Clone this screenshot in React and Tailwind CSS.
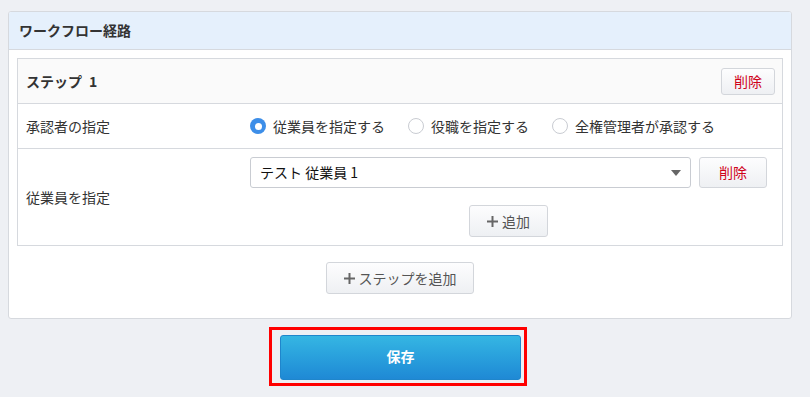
import React from "react";

const font = { fontFamily: '"Noto Sans CJK JP", "Noto Sans", sans-serif' };

function Radio({ checked, label }) {
  return (
    <label className="flex items-center gap-[7px]">
      {checked ? (
        <span className="w-[16px] h-[16px] rounded-full bg-[#3d8ee8] flex items-center justify-center">
          <span className="w-[7px] h-[7px] rounded-full bg-white" />
        </span>
      ) : (
        <span className="w-[16px] h-[16px] rounded-full border border-[#c9ccd2] bg-white" />
      )}
      <span className="text-[14px] text-[#333]">{label}</span>
    </label>
  );
}

function Plus() {
  return (
    <svg width="11" height="11" viewBox="0 0 11 11" className="mr-[4px]">
      <path d="M5.5 0 V11 M0 5.5 H11" stroke="#666" strokeWidth="2" />
    </svg>
  );
}

function GrayButton({ children, className = "" }) {
  return (
    <button
      className={
        "rounded-[3px] border border-[#d3d6db] bg-gradient-to-b from-[#fdfdfe] to-[#eef0f3] text-[14px] flex items-center justify-center " +
        className
      }
    >
      {children}
    </button>
  );
}

export default function App() {
  return (
    <div className="w-[810px] h-[397px] bg-[#eef0f4] pt-[11px] px-[8px] text-[#333]" style={font}>
      <div className="w-[784px] h-[308px] bg-white border border-[#d6d9de] rounded-[3px] overflow-hidden flex flex-col">
        <div className="h-[38px] bg-[#e5f0fc] border-b border-[#d6d9de] flex items-center pl-[10px] text-[14px] font-bold text-[#333]">
          ワークフロー経路
        </div>
        <div className="px-[8px] pt-[8px]">
          <div className="border border-[#d6d9de]">
            <div className="h-[45px] bg-[#fafafa] border-b border-[#d6d9de] flex items-center justify-between pl-[8px] pr-[7px]">
              <span className="text-[14px] font-bold text-[#333] flex items-center gap-[7px]">
                <span>ステップ</span>
                <span>1</span>
              </span>
              <GrayButton className="w-[54px] h-[27px] text-[#d0021b]">削除</GrayButton>
            </div>
            <div className="h-[45px] border-b border-[#d6d9de] flex items-center">
              <div className="w-[232px] pl-[8px] text-[14px]">承認者の指定</div>
              <div className="flex items-center gap-[23px]">
                <Radio checked label="従業員を指定する" />
                <Radio label="役職を指定する" />
                <Radio label="全権管理者が承認する" />
              </div>
            </div>
            <div className="h-[96px] flex items-center">
              <div className="w-[232px] pl-[8px] text-[14px]">従業員を指定</div>
              <div className="flex flex-col items-center">
                <div className="flex items-center gap-[8px]">
                  <div className="w-[441px] h-[31px] border border-[#c9ccd2] rounded-[3px] flex items-center justify-between pl-[9px] pr-[9px] text-[14px] text-[#111]">
                    <span>テスト 従業員 1</span>
                    <svg width="10" height="6" viewBox="0 0 10 6">
                      <path d="M0 0 L10 0 L5 6 Z" fill="#666" />
                    </svg>
                  </div>
                  <GrayButton className="w-[68px] h-[31px] text-[#d0021b]">削除</GrayButton>
                </div>
                <div className="w-full flex justify-start pl-[219px] mt-[17px]">
                  <GrayButton className="w-[79px] h-[32px] text-[#555]">
                    <Plus />
                    <span>追加</span>
                  </GrayButton>
                </div>
              </div>
            </div>
          </div>
        </div>
        <div className="flex justify-center mt-[16px]">
          <GrayButton className="w-[148px] h-[32px] text-[#555]">
            <Plus />
            <span>ステップを追加</span>
          </GrayButton>
        </div>
      </div>
      <div className="flex justify-center mt-[8px] pr-[14px]">
        <div className="border-[3px] border-[#ff0000] pl-[8px] pr-[3px] pt-[5px] pb-[3px] w-[258px] h-[59px]">
          <button className="w-full h-full rounded-[3px] bg-gradient-to-b from-[#35b6e3] to-[#1f89d5] border border-[#1f86cc] text-white text-[14px] font-bold pb-[3px]">
            保存
          </button>
        </div>
      </div>
    </div>
  );
}
